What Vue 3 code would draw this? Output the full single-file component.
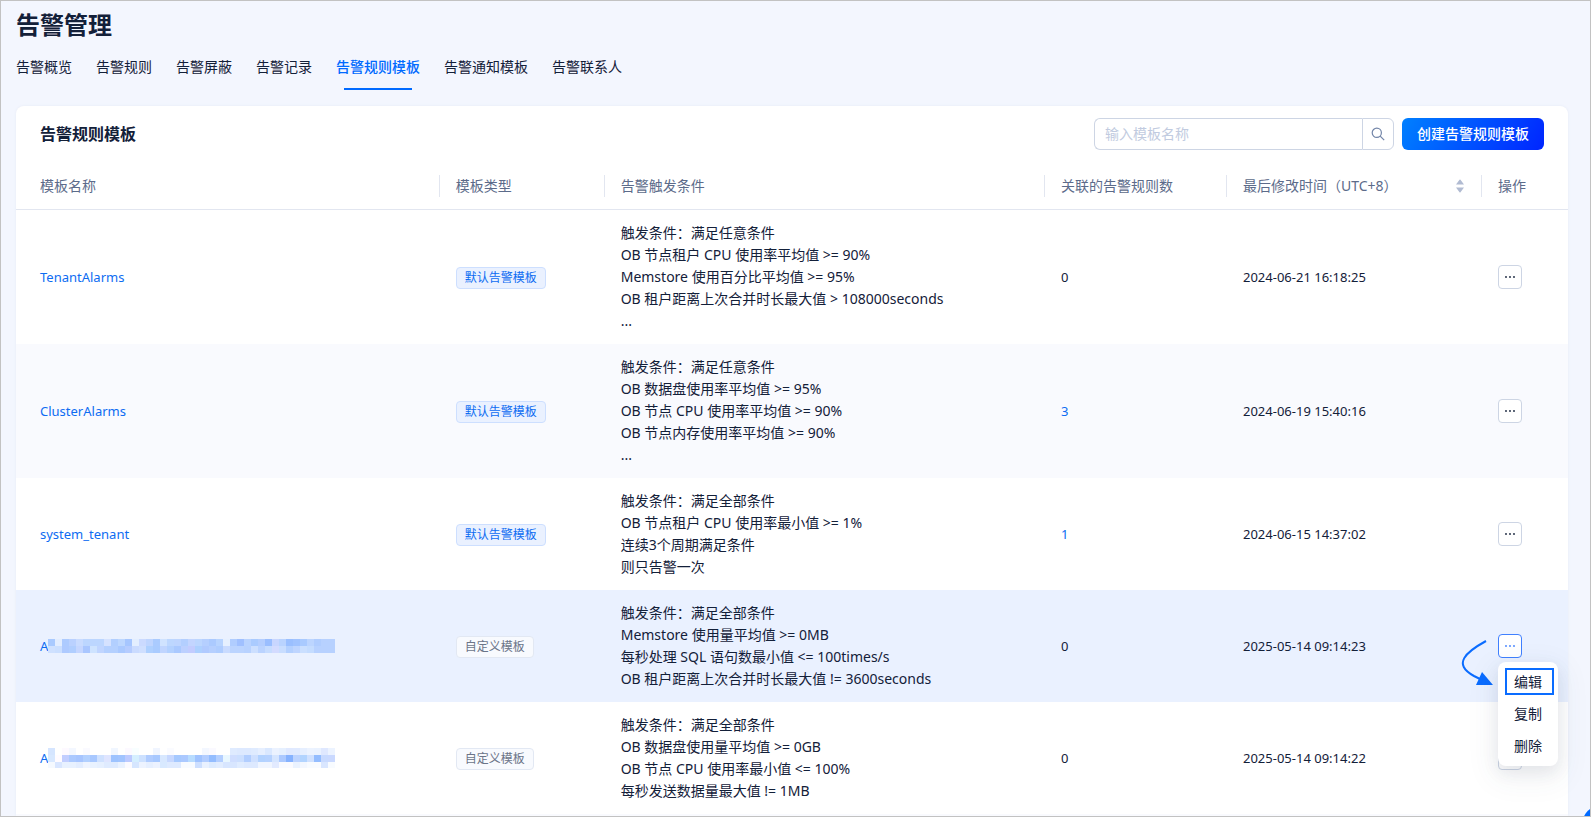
<script setup>
import { ref } from 'vue'

const tabs = ['告警概览', '告警规则', '告警屏蔽', '告警记录', '告警规则模板', '告警通知模板', '告警联系人']
const activeTab = ref('告警规则模板')
const keyword = ref('')

// masked names, one array per line of 7px blocks
const maskA = [
	'a9caff e2edff adcbff bad1ff c9dbff bcd6ff bcd6ff bcd6ff d5e2ff b2cfff bdd7ff a6c6ff e3eeff cbdaff bfd5ff aacbff d0e3ff bdd7ff bed5ff b3cfff c3d5ff bcd6ff b5cfff abcaff b8d4ff e6f0ff b0cdff a0c0ff b9d3ff aacbff b4ceff 9abeff c8d6ff b9d3ff 9abfff a0c3ff a9caff bcd5ff b0cdff b7d1ff b7d1ff',
	'cfe1ff cbdfff aecaff b0ceff c5d6ff a9c6ff cee3ff c0d5ff b4d0ff b4d0ff aac9ff b5ccff cadbff cfdfff aed0ff a9cbff c0d5ff b3d1ff aac9ff bcd0ff c2ccff add0ff b0caff b5cfff afcdff c9dbff bbd4ff bbd4ff b8d2ff ccdfff bad3ff c6dcff d3dbff c8ddff b3d0ff bed5ff cadfff c4dcff b7d1ff b7d1ff b7d1ff',
].map((line) => line.split(' '))

const maskB = [
	'd5e5ff ffffff fdf9ff f3f7ff ffffff fafaff ffffff ffffff ffffff f0f6ff ffffff fcf9ff f8feff ffffff ffffff f0f5ff ffffff fafbff ffffff ffffff ffffff ffffff f3f7ff faf9ff ffffff ffffff dfebff dde9ff dde9ff dfebff e6efff dae8ff ebf2ff e6f0ff e0e9ff e0eaff e6efff ecf3ff eaf2ff dfe8ff ecf3ff',
	'd8e8ff fffbff c2ceff abc9ff a7c5ff b2d0ff a8c8ff cfe1ff dfe5ff 9dc3ff a1c4ff bccaff d5efff cde1ff b0ccff a7c8ff d8e8ff c7d8ff a6c9ff abc9ff b8dcff a0c3ff b2cdff 94bdff b4cfff e9f7ff d0deff ccdfff b2ceff cfe0ff b2d2ff b6d2ff d5e5ff acc9ff 86b2ff bcd3ff b2d4ff d0e1ff 94bdff c8daff cad9ff',
	'f5f9ff d9e6ff e8f1ff e8f1ff e3edff eff4ff e9f2ff e6f0ff dfebff dfebff eaf2ff fbfaff d6e6ff edf3ff e6efff ecf2ff d8e9ff deeaff deeaff f8fbff f8fbff cddfff e9f1ff ddebff e2edff d8e6ff d8e6ff e0ecff dde9ff dde9ff f0f5ff f0f5ff e2eaff f9faff fafaff eaf2ff f3f7ff f8fbff f9fbff d9e6ff f8fbff',
].map((line) => line.split(' '))

const rows = [
	{
		name: 'TenantAlarms',
		type: '默认告警模板',
		preset: true,
		conditions: [
			'触发条件：满足任意条件',
			'OB 节点租户 CPU 使用率平均值 >= 90%',
			'Memstore 使用百分比平均值 >= 95%',
			'OB 租户距离上次合并时长最大值 > 108000seconds',
			'...',
		],
		count: 0,
		time: '2024-06-21 16:18:25',
	},
	{
		name: 'ClusterAlarms',
		type: '默认告警模板',
		preset: true,
		conditions: [
			'触发条件：满足任意条件',
			'OB 数据盘使用率平均值 >= 95%',
			'OB 节点 CPU 使用率平均值 >= 90%',
			'OB 节点内存使用率平均值 >= 90%',
			'...',
		],
		count: 3,
		time: '2024-06-19 15:40:16',
	},
	{
		name: 'system_tenant',
		type: '默认告警模板',
		preset: true,
		conditions: [
			'触发条件：满足全部条件',
			'OB 节点租户 CPU 使用率最小值 >= 1%',
			'连续3个周期满足条件',
			'则只告警一次',
		],
		count: 1,
		time: '2024-06-15 14:37:02',
	},
	{
		name: 'A',
		mask: maskA,
		type: '自定义模板',
		conditions: [
			'触发条件：满足全部条件',
			'Memstore 使用量平均值 >= 0MB',
			'每秒处理 SQL 语句数最小值 <= 100times/s',
			'OB 租户距离上次合并时长最大值 != 3600seconds',
		],
		count: 0,
		time: '2025-05-14 09:14:23',
		open: true,
	},
	{
		name: 'A',
		mask: maskB,
		type: '自定义模板',
		conditions: [
			'触发条件：满足全部条件',
			'OB 数据盘使用量平均值 >= 0GB',
			'OB 节点 CPU 使用率最小值 <= 100%',
			'每秒发送数据量最大值 != 1MB',
		],
		count: 0,
		time: '2025-05-14 09:14:22',
	},
]

const menu = ['编辑', '复制', '删除']
</script>

<template>
	<div class="page">
		<h1 class="page-title">告警管理</h1>
		<nav class="tabs">
			<a
				v-for="tab in tabs"
				:key="tab"
				href="#"
				class="tab"
				:class="{ active: tab === activeTab }"
				@click.prevent="activeTab = tab"
				>{{ tab }}</a
			>
		</nav>

		<main class="card">
			<header class="card-head">
				<h2>告警规则模板</h2>
				<form class="search" @submit.prevent>
					<input v-model="keyword" type="text" placeholder="输入模板名称" aria-label="输入模板名称" />
					<button type="submit" aria-label="搜索">
						<svg width="14" height="14" viewBox="0 0 14 14" fill="none" stroke="#7285a8" stroke-width="1.2">
							<circle cx="5.8" cy="5.8" r="4.6" />
							<path d="M9.2 9.2L13.2 13.2" />
						</svg>
					</button>
				</form>
				<button class="create">创建告警规则模板</button>
			</header>

			<table>
				<colgroup>
					<col class="col-name" />
					<col class="col-type" />
					<col />
					<col class="col-count" />
					<col class="col-time" />
					<col class="col-action" />
				</colgroup>
				<thead>
					<tr>
						<th>模板名称</th>
						<th>模板类型</th>
						<th>告警触发条件</th>
						<th>关联的告警规则数</th>
						<th>
							<div class="sortable">
								<span>最后修改时间（UTC+8）</span>
								<svg width="10" height="14" viewBox="0 0 10 14" fill="#b1bbd2">
									<path d="M4 0.4Q4.3 0.4 4.5 0.8L8 5.4H0L3.5 0.8Q3.7 0.4 4 0.4Z" />
									<path d="M4 13.6Q4.3 13.6 4.5 13.2L8 8.6H0L3.5 13.2Q3.7 13.6 4 13.6Z" />
								</svg>
							</div>
						</th>
						<th>操作</th>
					</tr>
				</thead>
				<tbody>
					<tr v-for="(row, i) in rows" :key="i" :class="{ hover: row.open }">
						<td class="latin">
							<a href="#" class="name">
								<span>{{ row.name }}</span>
								<svg v-if="row.mask" class="mask" width="287" :height="row.mask.length > 2 ? 20 : 14">
									<template v-for="(line, y) in row.mask" :key="y">
										<rect
											v-for="(color, x) in line"
											:key="x"
											:x="x * 7"
											:y="y * 7"
											width="7"
											height="7"
											:fill="'#' + color"
										/>
									</template>
								</svg>
							</a>
						</td>
						<td><span class="tag" :class="{ preset: row.preset }">{{ row.type }}</span></td>
						<td>
							<div v-for="line in row.conditions" :key="line" class="line">{{ line }}</div>
						</td>
						<td class="latin">
							<a v-if="row.count" href="#">{{ row.count }}</a>
							<template v-else>{{ row.count }}</template>
						</td>
						<td class="latin">{{ row.time }}</td>
						<td>
							<div class="action">
								<button class="more" :class="{ open: row.open }" aria-label="更多">
									<svg width="12" height="4" viewBox="0 0 12 4" fill="currentColor">
										<circle cx="2" cy="2" r="0.9" />
										<circle cx="6" cy="2" r="0.9" />
										<circle cx="10" cy="2" r="0.9" />
									</svg>
								</button>
								<template v-if="row.open">
									<div class="menu">
										<button v-for="item in menu" :key="item">{{ item }}</button>
										<span class="callout"></span>
									</div>
									<svg class="arrow" width="34" height="50" viewBox="0 0 34 50">
										<path d="M26 4C6 15 -8 27 14 39L22 43" fill="none" stroke="#0a6cff" stroke-width="2" />
										<path d="M22 35L33 48H16Z" fill="#0a6cff" />
									</svg>
								</template>
							</div>
						</td>
					</tr>
				</tbody>
			</table>
			<div class="next-row"></div>
		</main>
		<span class="float-ball"></span>
	</div>
</template>

<style>
body {
	margin: 0;
}
</style>

<style scoped>
.page {
	position: relative;
	display: flex;
	flex-direction: column;
	box-sizing: border-box;
	height: 100vh;
	padding: 8px 22px 0 15px;
	overflow: hidden;
	border: 1px solid #c2c2c2;
	background: #f3f6fe;
	color: #132039;
	font: 14px/22px 'Noto Sans', 'Noto Sans CJK SC', sans-serif;
}
.latin {
	font-size: 13px;
}
a {
	color: #0d6cf2;
	text-decoration: none;
}
button,
input {
	box-sizing: border-box;
	margin: 0;
	padding: 0;
	font: inherit;
}
.page-title {
	margin: 0;
	font-size: 24px;
	line-height: 32px;
}
.tabs {
	display: flex;
	gap: 24px;
	margin: 3px 0 16px;
}
.tab {
	position: relative;
	padding: 12px 0;
	color: #132039;
}
.tab.active {
	color: #006aff;
	font-weight: 500;
}
.tab.active::after {
	content: '';
	position: absolute;
	right: 8px;
	bottom: 0;
	left: 8px;
	height: 2px;
	background: #006aff;
}
.card {
	display: flex;
	flex: 1;
	flex-direction: column;
	border-radius: 8px 8px 0 0;
	background: #fff;
	box-shadow: 0 0 3px #e6ebf5;
}
.card-head {
	display: flex;
	align-items: center;
	gap: 8px;
	padding: 12px 24px;
}
.card-head h2 {
	flex: 1;
	margin: 0;
	font-size: 16px;
	line-height: 24px;
}
.search {
	display: flex;
	width: 300px;
	height: 32px;
}
.search input {
	flex: 1;
	min-width: 0;
	padding: 0 10px;
	border: 1px solid #cdd5e4;
	border-right: 0;
	border-radius: 6px 0 0 6px;
	outline: 0;
	color: #132039;
}
.search input::placeholder {
	color: #c1cbe0;
}
.search button {
	display: flex;
	align-items: center;
	justify-content: center;
	width: 32px;
	border: 1px solid #cdd5e4;
	border-radius: 0 6px 6px 0;
	background: #fff;
}
.create {
	height: 32px;
	padding: 0 15px;
	border: 0;
	border-radius: 6px;
	background: linear-gradient(120deg, #0080ff, #0025ff);
	color: #fff;
	font-weight: 500;
}
table {
	width: 100%;
	border-spacing: 0;
	table-layout: fixed;
}
.col-name {
	width: 27.3%;
}
.col-type {
	width: 165px;
}
.col-count {
	width: 182px;
}
.col-time {
	width: 255px;
}
.col-action {
	width: 86px;
}
th {
	position: relative;
	padding: 13px 16px 12px;
	border-bottom: 1px solid #e2e6f0;
	color: #5c6b8a;
	font-weight: 400;
	text-align: left;
	white-space: nowrap;
}
th + th::before {
	content: '';
	position: absolute;
	top: 13px;
	left: -1px;
	width: 1px;
	height: 22px;
	background: #e2e6f0;
}
td {
	padding: 12px 16px;
}
th:first-child,
td:first-child {
	padding-left: 24px;
}
tbody tr:nth-child(even) {
	background: #f9fafe;
}
tbody tr.hover {
	background: #eaf1ff;
}
.sortable {
	display: flex;
	align-items: center;
	justify-content: space-between;
}
.name {
	display: flex;
	align-items: center;
}
.mask {
	flex: none;
}
.line {
	height: 22px;
	white-space: nowrap;
}
.tag {
	display: inline-block;
	padding: 0 8px;
	border: 1px solid #e2e8f3;
	border-radius: 4px;
	background: #f8fafe;
	color: #6b7488;
	font-size: 12px;
	line-height: 20px;
	vertical-align: middle;
}
.tag.preset {
	border-color: #cddfff;
	background: #eaf1ff;
	color: #0d6cf2;
}
.action {
	position: relative;
	width: 24px;
}
.more {
	display: flex;
	align-items: center;
	justify-content: center;
	width: 24px;
	height: 24px;
	border: 1px solid #cdd5e4;
	border-radius: 4px;
	background: #fff;
	color: #132039;
}
.more.open {
	border-color: #4080ff;
	color: #4080ff;
}
.menu {
	position: absolute;
	z-index: 2;
	top: 28px;
	left: 0;
	display: flex;
	flex-direction: column;
	box-sizing: border-box;
	width: 60px;
	padding: 4px;
	border-radius: 8px;
	background: #fff;
	box-shadow:
		0 6px 16px rgba(54, 69, 99, 0.1),
		0 9px 28px 8px rgba(54, 69, 99, 0.05);
}
.menu button {
	height: 32px;
	padding: 0 12px;
	border: 0;
	background: none;
	color: #132039;
	text-align: left;
}
.callout {
	position: absolute;
	top: 6px;
	right: 4px;
	left: 7px;
	box-sizing: border-box;
	height: 27px;
	border: 2px solid #0a6cff;
	pointer-events: none;
}
.arrow {
	position: absolute;
	top: 3px;
	right: 28px;
}
.next-row {
	flex: 1;
	background: #f9fafe;
}
.float-ball {
	position: absolute;
	right: -32px;
	bottom: -29px;
	width: 40px;
	height: 40px;
	border-radius: 50%;
	background: #006aff;
}
</style>
